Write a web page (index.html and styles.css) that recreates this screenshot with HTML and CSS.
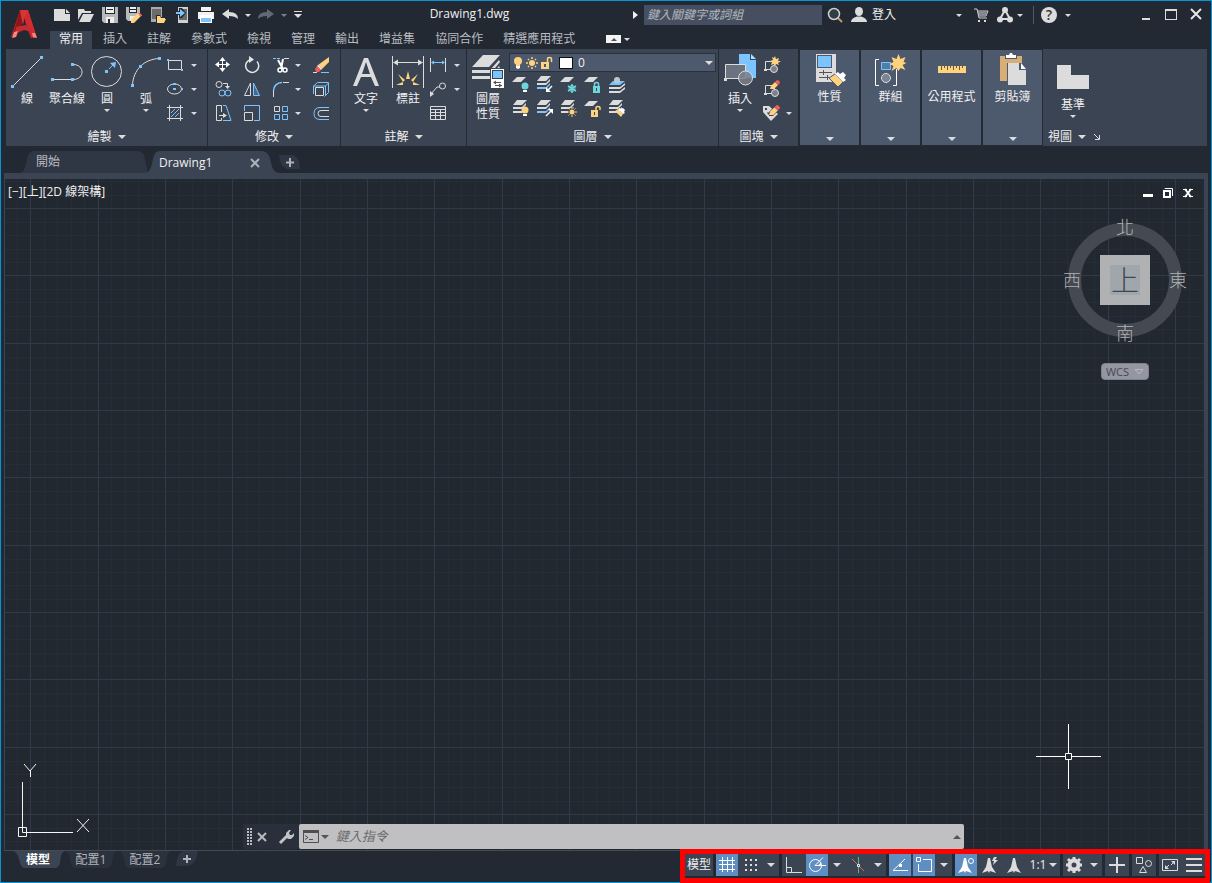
FILE: index.html
```html
<!DOCTYPE html>
<html lang="zh-Hant">
<head>
<meta charset="utf-8">
<meta name="viewport" content="width=device-width, initial-scale=1">
<title>Drawing1.dwg</title>
<link rel="stylesheet" href="styles.css">
</head>
<body>
<svg class="defs" aria-hidden="true">
  <defs>
    <symbol id="sheet1" viewBox="0 0 18 18"><path class="f" d="M5 1h9l-5 5H0z"/></symbol>
    <symbol id="sheet3" viewBox="0 0 18 18"><path class="f" d="M5 0h10l-5 5H1z"/><path class="f" d="M1 7h9l4-4v2l-4 4H1z"/><path class="f" d="M1 11h9l4-4v2l-4 4H1z"/></symbol>
    <symbol id="sheet3b" viewBox="0 0 18 18"><path class="f" d="M5 0h10l-5 5H1z"/><path class="f" d="M1 7h9l4-4v2l-4 4H1z"/><path class="fb" d="M1 11h9l4-4v2l-4 4H1z"/></symbol>
    <symbol id="pencil" viewBox="0 0 10 10"><path class="fy" d="M1 6l4-4 3 3-4 4H0z"/><path class="fr" d="M5 2l1.500-1.500Q7 0 8 0l2 2q0 1-.5 1.500L8 5z"/></symbol>
  </defs>
</svg>
<div class="window">
  <header class="header">
    <button class="logo" aria-label="應用程式功能表">
      <svg width="26" height="30" viewBox="0 0 26 30"><path d="M9 1h8l9 28h-6l-2-5-3-8-2-8-3 8-5 11-5 1z" fill="#c8262c"/><path d="M9 1h4l-1 8L6 28l-5 1z" fill="#8e1518"/><path d="M17 1l9 28-5-2-8-20 1-6z" fill="#d22c32"/><path d="M9 1h8l-3 6-2 9-2-9z" fill="#d6353a"/><path d="M5 18l9-2 5 2 2 5-8-2-9 4z" fill="#c42a2e"/><path d="M1 29l2-6 4-1-2 6zM21 24l3 0 2 5-4-1z" fill="#ee8d84"/></svg>
    </button>
    <div class="titlebar">
      <div class="quick">
        <button class="qb" aria-label="新建"><svg width="18" height="18"><path class="f" d="M1 3h11v5h5v7H1z"/><path class="f" d="M13 3l4 4h-4z"/></svg></button>
        <button class="qb" aria-label="開啟"><svg width="18" height="18"><path class="f" d="M1 3h6l1 2h6v2H5L1 14z"/><path class="f" d="M6 8h11l-4 8H2z"/></svg></button>
        <button class="qb" aria-label="儲存"><svg width="18" height="18"><path fill="#b9b9b9" d="M1 1h16v16H3l-2-2z"/><path fill="#222933" d="M4 1h10v7H4z"/><path fill="#eee" d="M5 1h8v6H5zM5 11h8v6H5z"/><path fill="#222933" d="M6 3h6v1H6zM7 13h2v4H7z"/></svg></button>
        <button class="qb" aria-label="另存"><svg width="18" height="18"><path fill="#b9b9b9" d="M1 1h14v7L7 15H3l-2-2z"/><path fill="#222933" d="M4 1h8v6H4z"/><path fill="#eee" d="M5 1h6v5H5zM5 10h6l-4 5H5z"/><path fill="#222933" d="M5 3h6v1H5z"/><path class="fy" d="M6 14l7-7 3 3-7 7H6z"/><path class="fr" d="M13 7h2l2 2v1h-2z"/></svg></button>
        <button class="qb" aria-label="從行動裝置開啟"><svg width="18" height="18"><path fill="#a9a9a9" d="M2 1h11v15H2z"/><path fill="#6b6b6b" d="M3 3h9v10H3z"/><path fill="#222933" d="M7 9h4l1 2h5l-2 7H7z"/><path class="fy" d="M8 10h3l1 2h4v1h-5l-3 4zM11 13h6l-2 4H8z"/></svg></button>
        <button class="qb" aria-label="儲存至行動裝置"><svg width="18" height="18"><path fill="#d0d0d0" d="M5 1h10v16H5z"/><path fill="#6b6b6b" d="M6 3h8v11H6z"/><path fill="#222933" d="M6 2h3l4 5-4 5H6V9H2V5h4z"/><path class="fb" d="M3 6h4V3l5 4-5 4V8H3z"/></svg></button>
        <button class="qb" aria-label="出圖"><svg width="18" height="18"><path fill="#f1f1f1" d="M4 1h10v4H4zM1 6h16v7h-2v-2H3v2H1z"/><path fill="#fff" d="M3 9h12v8H3z"/><path class="fb" d="M4 12h10v4H4z"/></svg></button>
        <button class="qb" aria-label="退回"><svg width="18" height="18"><path class="f" d="M1 8l7-5v3q9 0 9 7-3-3-9-3v3z"/></svg></button>
        <button class="drop" aria-label="退回清單"><i class="caret"></i></button>
        <button class="qb dim" aria-label="重做"><svg width="18" height="18"><path d="M17 8l-7-5v3q-9 0-9 7 3-3 9-3v3z" fill="#636973"/></svg></button>
        <button class="drop dim" aria-label="重做清單"><i class="caret"></i></button>
        <button class="drop wide" aria-label="自訂"><svg width="10" height="10"><path class="f" d="M1 1h8v1H1zM1 4h8L5 8z"/></svg></button>
      </div>
      <div class="doc-title">Drawing1.dwg</div>
      <div class="search">
        <i class="play"></i>
        <input type="search" aria-label="搜尋" placeholder="鍵入關鍵字或詞組">
        <button aria-label="執行搜尋"><svg width="18" height="18"><path d="M12 12l4 4" stroke="#c39a66" stroke-width="2"/><circle cx="8" cy="8" r="5.500" fill="#2d3e47" stroke="#d0d0d0" stroke-width="1.500"/></svg></button>
        <button class="login"><svg width="18" height="18"><ellipse class="f" cx="9" cy="5.500" rx="4" ry="4.500"/><path class="f" d="M1 16q0-4 6-5.500h4Q17 12 17 16z"/></svg><span>登入</span></button>
      </div>
      <div class="services">
        <button class="drop" aria-label="登入選項"><i class="caret"></i></button>
        <button class="cart" aria-label="App Store"><svg width="16" height="16"><path d="M1 2h3l2 9h8M5 4h10l-2 5H6z" fill="none" stroke="#d0d0d0"/><path d="M5 4h9l-1 5H6z" fill="#868a90"/><path class="f" d="M5 13h2v2H5zM11 13h2v2h-2z"/></svg></button>
        <button aria-label="連線"><svg width="18" height="18"><path d="M9 4L4 13h10z" fill="none" stroke="#dcdcdc" stroke-width="2"/><circle class="f" cx="9" cy="4" r="3"/><circle class="f" cx="4" cy="13.500" r="3"/><circle class="f" cx="14" cy="13.500" r="3"/></svg></button>
        <button class="drop" aria-label="連線選項"><i class="caret"></i></button>
        <span class="rule"></span>
        <button class="help" aria-label="說明"><span>?</span></button>
        <button class="drop" aria-label="說明選項"><i class="caret"></i></button>
      </div>
      <div class="winctl">
        <button aria-label="最小化"><svg width="14" height="14"><path class="f" d="M3 10h8v2H3z"/></svg></button>
        <button aria-label="最大化"><svg width="14" height="14"><path class="f" d="M1 1h12v11H1zM2 3v8h10V3z" fill-rule="evenodd"/></svg></button>
        <button aria-label="關閉"><svg width="14" height="14"><path d="M2 1l10 10M12 1L2 11" stroke="#e6e6e6" stroke-width="2"/></svg></button>
      </div>
    </div>
    <nav class="tabs">
      <button class="on">常用</button><button>插入</button><button>註解</button><button>參數式</button><button>檢視</button><button>管理</button><button>輸出</button><button>增益集</button><button>協同合作</button><button>精選應用程式</button>
      <div class="ribbon-toggle"><button class="min" aria-label="最小化功能區"><i class="caret up"></i></button><button class="drop" aria-label="功能區選項"><i class="caret"></i></button></div>
    </nav>
  </header>

  <main class="ribbon">
    <section class="panel">
      <div class="tools pad">
        <button class="big"><svg width="32" height="32"><path class="l" d="M1.500 30.500l29-29"/><path class="fb" d="M0 29h3v3H0zM29 0h3v3h-3z"/></svg><span>線</span></button>
        <button class="big"><svg width="32" height="32"><path class="l" d="M2 23.500h20M22 8.500c12 0 12 15 0 15"/><path class="fb" d="M0 22h3v3H0zM20 22h3v3h-3zM20 7h3v3h-3z"/></svg><span>聚合線</span></button>
        <button class="big"><svg width="32" height="32"><circle class="l" cx="15.500" cy="15.500" r="15"/><path class="lb" d="M18 13l5-5"/><path class="fb" d="M14 14h3v3h-3zM19 7l6-1-1 6z"/></svg><span>圓</span><i class="caret"></i></button>
        <button class="big narrow"><svg width="32" height="32"><path class="l" d="M2.500 29.500C3 14 14 3 29.500 2.500"/><path class="fb" d="M1 28h3v3H1zM9 9h3v3H9zM28 1h3v3h-3z"/></svg><span>弧</span><i class="caret"></i></button>
        <div class="grid-draw">
          <button aria-label="矩形"><svg width="18" height="18"><path class="l" d="M2.500 4.500h13v9h-13z"/><path class="fb" d="M1 3h2v2H1zM15 13h2v2h-2z"/></svg></button><button class="drop" aria-label="矩形選項"><i class="caret"></i></button>
          <button aria-label="橢圓"><svg width="18" height="18"><ellipse class="l" cx="8.500" cy="9" rx="7" ry="5"/><path class="fb" d="M7 3h3v2H7zM7 8h3v2H7zM15 8h2v2h-2z"/></svg></button><button class="drop" aria-label="橢圓選項"><i class="caret"></i></button>
          <button aria-label="填充線"><svg width="18" height="18"><path class="l" d="M3.500 1v16M14.500 1v16M1 3.500h16M1 14.500h16"/><path class="lb" d="M5 9l4-4M5 13l8-8M9 13l4-4"/></svg></button><button class="drop" aria-label="填充線選項"><i class="caret"></i></button>
        </div>
      </div>
      <button class="foot">繪製<i class="caret lg"></i></button>
    </section>

    <section class="panel">
      <div class="tools">
        <div class="grid-modify">
          <button aria-label="移動"><svg width="18" height="18"><path d="M8.500 3v12M3 8.500h12" stroke="#fff"/><path d="M8.500 1l3 4h-6zM8.500 16l3-4h-6zM1 8.500l4-3v6zM16 8.500l-4-3v6z" fill="#fff"/></svg></button>
          <button aria-label="旋轉"><svg width="18" height="18"><path d="M8 3.500a6.500 6.500 0 1 0 6 2" fill="none" stroke="#e6e6e6" stroke-width="1.500"/><path d="M6 0l5 3.500L6 7z" fill="#e6e6e6"/></svg></button>
          <button aria-label="修剪"><svg width="18" height="18"><path class="lb" d="M1 2.500h8" stroke-dasharray="3 1"/><path class="l" d="M12 2.500h5"/><path d="M6 4l5 9M11 3l-2 10" stroke="#fff" stroke-width="2"/><circle cx="8" cy="14" r="2" fill="none" stroke="#fff" stroke-width="1.500"/><circle cx="13" cy="14" r="2" fill="none" stroke="#fff" stroke-width="1.500"/></svg></button>
          <button class="drop" aria-label="修剪選項"><i class="caret"></i></button>
          <button aria-label="刪除"><svg width="18" height="18"><path class="fy" d="M17 1v5l-7 7-4-4z"/><path fill="#fff" d="M6 9l4 4-1 1-4-4z"/><path class="fr" d="M5 10l4 4-2 2H4l-1-3z"/><path class="l" d="M1 16.500h4"/><path class="lb" d="M9 16.500h8"/></svg></button>

          <button aria-label="複製"><svg width="18" height="18"><circle class="l" cx="5" cy="4.500" r="3"/><path class="l" d="M9 3.500h4.500V7"/><path class="f" d="M11 6h5l-2.500 3z"/><circle class="lb" cx="8" cy="13" r="3"/><circle class="lb" cx="14" cy="13" r="3"/></svg></button>
          <button aria-label="鏡射"><svg width="18" height="18"><path class="l" d="M7.500 3v12.500h-6z"/><path d="M10.500 3v12.500h6z" fill="#46688a" stroke="#7cc4ff"/></svg></button>
          <button aria-label="圓角"><svg width="18" height="18"><path class="lb" d="M1.500 11C1.500 6 5 2.500 10 2.500" stroke-width="1.500"/><path class="l" d="M11 2.500h6M1.500 11v6"/></svg></button>
          <button class="drop" aria-label="圓角選項"><i class="caret"></i></button>
          <button aria-label="分解"><svg width="18" height="18"><path class="l" d="M3.500 7.500h8v8h-8z"/><path class="lb" d="M1.500 14V6l4-3.500h11v10l-4 4M1.500 6h12v10M13.500 6l3-3"/></svg></button>

          <button aria-label="拉伸"><svg width="18" height="18"><path class="l" d="M7.500 8V1.500h-5v15h5V14M5 11.500h6"/><path class="f" d="M9 9l4 2.500L9 14z"/><path class="lb" d="M9 1.500h3l5 15H9"/></svg></button>
          <button aria-label="比例"><svg width="18" height="18"><path class="lb" d="M1.500 7V1.500h15v15H11"/><path class="l" d="M1.500 8.500h8v8h-8z"/></svg></button>
          <button aria-label="陣列"><svg width="18" height="18"><path class="l" d="M2.500 2.500h5v5h-5z"/><path class="lb" d="M10.500 2.500h5v5h-5zM2.500 10.500h5v5h-5zM10.500 10.500h5v5h-5z"/></svg></button>
          <button class="drop" aria-label="陣列選項"><i class="caret"></i></button>
          <button aria-label="偏移"><svg width="18" height="18"><path class="lb" d="M17 3.500H8q-6 0-6 6t6 6h9"/><path class="l" d="M17 6.500H9q-3 0-3 3t3 3h8"/></svg></button>
        </div>
      </div>
      <button class="foot">修改<i class="caret lg"></i></button>
    </section>

    <section class="panel">
      <div class="tools">
        <button class="big text-tool"><svg width="32" height="32"><path class="f" d="M14 2h4l11 28h-4l-4-9H11l-4 9H3zM16 6l-4 12h8z" fill-rule="evenodd"/></svg><span>文字</span><i class="caret"></i></button>
        <button class="big dim-tool"><svg width="32" height="32"><path class="l" d="M.5 0v32M31.500 0v32M2 6.500h28"/><path class="f" d="M1 6.500l5-3v6zM31 6.500l-5-3v6z"/><path class="fy" d="M16 15l2 8h-4zM6 18l7 6-2 2zM26 18l-7 6 2 2zM4 29l7-3v3zM28 29l-7-3v3z"/></svg><span>標註</span></button>
        <div class="grid-draw annot">
          <button aria-label="線性"><svg width="18" height="18"><path class="l" d="M1.500 2v14M16.500 2v14"/><path class="lb" d="M3 6.500h12"/><path class="fb" d="M2 6.500l3-2v4zM16 6.500l-3-2v4z"/></svg></button><button class="drop" aria-label="線性選項"><i class="caret"></i></button>
          <button aria-label="引線"><svg width="18" height="18"><circle class="l" cx="13.500" cy="6" r="3"/><path class="l" d="M2 14l6-7h3"/><path class="f" d="M1 11l4 3-4 3z"/></svg></button><button class="drop" aria-label="引線選項"><i class="caret"></i></button>
          <button aria-label="表格"><svg width="18" height="18"><path class="l" d="M1.500 2.500h15v13h-15zM1 5.500h16M1 8.500h16M1 11.500h16M6.500 5v10M11.500 5v10"/></svg></button>
        </div>
      </div>
      <button class="foot">註解<i class="caret lg"></i></button>
    </section>

    <section class="panel">
      <div class="tools">
        <button class="big layer-tool"><svg width="32" height="33"><path class="f" d="M11 0h17L17 12H0z"/><path class="f" d="M0 15h18l9-10 1 2-9 11H0z" /><path class="f" d="M0 21h18l9-10 1 2-9 11H0z"/><path fill="#3b4453" d="M18 13h15v20H18z"/><path fill="#fff" d="M19 14h13v19H19z"/><path fill="#3b4453" d="M20 15h11v9H20z"/><path class="fb" d="M21 16h9v7h-9z"/><path d="M22 27.500h7M23 30.500h7" stroke="#555"/><path fill="#555" d="M21 27.500l3-2v4zM30 30.500l-3-2v4z"/></svg><span>圖層<br>性質</span></button>
        <div class="layers">
          <div class="layer-combo">
            <svg width="14" height="14"><circle class="fy" cx="7" cy="5" r="4"/><path class="fy" d="M5 8h4v2H5z"/><path fill="#fff" d="M5 10h4v2l-2 1-2-1z"/></svg>
            <svg width="14" height="14"><circle class="fy" cx="7" cy="7" r="3"/><path d="M7 1v2M7 11v2M1 7h2M11 7h2M3 3l1 1M10 10l1 1M11 3l-1 1M4 10l-1 1" stroke="#ffd27f" stroke-width="1.500"/></svg>
            <svg width="14" height="14"><path class="fy" d="M2 6h8v7H2z"/><path d="M8.500 6V3q0-1.500 2-1.500t2 1.500v3" fill="none" stroke="#ffd27f" stroke-width="1.500"/><path fill="#4d596d" d="M5 8h2v3H5z"/></svg>
            <span class="swatch"></span>
            <select aria-label="圖層"><option>0</option></select>
            <i class="caret lg"></i>
          </div>
          <div class="layer-grid">
            <button aria-label="關閉圖層"><svg width="18" height="18"><use href="#sheet1"/><circle class="ft" cx="13" cy="10" r="3.500"/><path fill="#fff" d="M11 14h4v2h-4z"/></svg></button>
            <button aria-label="設為目前"><svg width="18" height="18"><use href="#sheet3b"/><path d="M16 10l-4 4" stroke="#fff" stroke-width="1.500"/><path fill="#fff" d="M10 16v-5l5 5z"/></svg></button>
            <button aria-label="凍結"><svg width="18" height="18"><use href="#sheet1"/><path d="M12 8v9M8 10l8 5M16 10l-8 5" stroke="#6fd6dd" stroke-width="1.500"/><circle cx="12" cy="12.500" r="3" fill="none" stroke="#6fd6dd"/></svg></button>
            <button aria-label="鎖護"><svg width="18" height="18"><use href="#sheet1"/><path class="ft" d="M9 10h7v7H9z"/><path d="M10.500 10V8q0-1.500 2-1.500t2 1.500v2" fill="none" stroke="#6fd6dd" stroke-width="1.500"/><path fill="#3b4453" d="M12 12h1v3h-1z"/></svg></button>
            <button aria-label="相符"><svg width="18" height="18"><path class="fb" d="M5 5h12l-5 4H1z"/><path class="f" d="M1 11h11l5-4v2l-5 4H1zM1 15h11l5-4v2l-5 4H1z"/><circle cx="9" cy="4" r="3" fill="#c4c6c8"/></svg></button>
            <button aria-label="開啟全部"><svg width="18" height="18"><use href="#sheet3"/><circle class="fy" cx="13" cy="10" r="3.500"/><path fill="#fff" d="M11 14h4v2h-4z"/></svg></button>
            <button aria-label="前次圖層"><svg width="18" height="18"><use href="#sheet3b"/><path d="M10 16l5-5" stroke="#fff" stroke-width="1.500"/><path fill="#fff" d="M17 9v5l-5-5z"/></svg></button>
            <button aria-label="全部解凍"><svg width="18" height="18"><use href="#sheet3"/><circle cx="12" cy="12" r="4" fill="#3b4453"/><circle class="fy" cx="12" cy="12" r="2.500"/><path d="M12 7v2M12 15v2M7 12h2M15 12h2M8.500 8.500l1 1M14.500 14.500l1 1M15.500 8.500l-1 1M8.500 15.500l1-1" stroke="#ffd27f"/></svg></button>
            <button aria-label="解鎖"><svg width="18" height="18"><use href="#sheet1"/><path class="fy" d="M7 10h7v7H7z"/><path d="M12 10V8q0-1.500 2-1.500T16 8v2" fill="none" stroke="#ffd27f" stroke-width="1.500"/><path fill="#3b4453" d="M10 12h1v3h-1z"/></svg></button>
            <button aria-label="變更圖層"><svg width="18" height="18"><use href="#sheet3"/><path class="fy" d="M7 11l3-2 5 5-2 3z"/><path fill="#fff" d="M10 9l2-1 1 1 2-1 2 2-1 2 1 1-2 1z"/></svg></button>
          </div>
        </div>
      </div>
      <button class="foot">圖層<i class="caret lg"></i></button>
    </section>

    <section class="panel">
      <div class="tools">
        <button class="big insert-tool"><svg width="32" height="34"><path class="fb" d="M15 0h11v6h6v18H15z"/><path fill="#b5dfff" d="M27 0l5 5h-5z"/><path fill="#6b7280" stroke="#dcdcdc" d="M1.500 10.500h20v14h-20z"/><path class="f" d="M0 24h3v3H0z"/><circle cx="21.500" cy="24" r="7" fill="#7a808c" fill-opacity=".85" stroke="#dcdcdc"/></svg><span>插入</span><i class="caret"></i></button>
        <div class="grid-draw block">
          <button aria-label="建立"><svg width="18" height="18"><path class="l" d="M2.500 5.500h9v8h-9z"/><path class="f" d="M1 13h3v2H1z"/><circle cx="11" cy="13" r="3.500" fill="#7a808c" stroke="#dcdcdc"/><path class="fy" d="M12 0l1 3 3-1-1 3 3 0-3 2 1 2-3-1-1 2-1-2-3 1 1-3-2-1 3-1-1-3 2 1z"/></svg></button><span></span>
          <button aria-label="編輯"><svg width="18" height="18"><path class="l" d="M2.500 5.500h9v8h-9z"/><path class="f" d="M1 13h3v2H1z"/><circle cx="12" cy="13" r="3.500" fill="#7a808c" stroke="#dcdcdc"/><use href="#pencil" x="7" y="0" width="10" height="10"/></svg></button><span></span>
          <button aria-label="編輯屬性"><svg width="18" height="18"><path class="f" d="M0 2h6l9 8-7 7-8-9z"/><path fill="#3b4453" d="M2 4h2v2H2zM5 8l3 3-1 1-3-3z"/><path fill="#3b4453" d="M6 8l7-7 4 4-7 7H6z"/><use href="#pencil" x="6" y="1" width="11" height="11"/></svg></button><button class="drop" aria-label="屬性選項"><i class="caret"></i></button>
        </div>
      </div>
      <button class="foot">圖塊<i class="caret lg"></i></button>
    </section>

    <button class="folded"><svg width="32" height="32"><path class="f" d="M2 0h20v28H2z"/><path fill="#4d596d" d="M3 1h15v13H3z"/><path class="fb" d="M4 2h13v11H4z"/><path d="M5 18.500h13M5 23.500h10M9.500 16v5M13.500 21v5" stroke="#555"/><path class="fy" stroke="#4d596d" d="M15 24l6-4 8 8-5 5z"/><path fill="#fff" d="M21 20l3-2 2 2 3-2 3 3-2 3 2 2-3 2z"/></svg><span>性質</span><i class="caret lg"></i></button>
    <button class="folded"><svg width="32" height="32"><path d="M4 5.500H.5v26H4M18 31.500h3.500V15" fill="none" stroke="#fff"/><path d="M6.500 8.500h9v7h-9z" fill="#4f7fa8" stroke="#7cc4ff"/><circle cx="11" cy="24" r="4.500" fill="#7a8492" stroke="#dcdcdc"/><path class="fy" d="M23.500 0l2 5 5-2-2 5 3 1-4 2 3 5-5-2-2 3-2-3-5 3 2-5-4-2 4-2-2-5 5 2z"/></svg><span>群組</span><i class="caret lg"></i></button>
    <button class="folded"><svg width="32" height="32"><path class="fy" d="M2 12h28v7H2z"/><path d="M5.500 12v4M8.500 12v2M11.500 12v4M14.500 12v2M17.500 12v4M20.500 12v2M23.500 12v4M26.500 12v2" stroke="#6b5a34"/></svg><span>公用程式</span><i class="caret lg"></i></button>
    <button class="folded"><svg width="32" height="32"><path fill="#d9ad76" d="M3 2h22v7H10v18H3z"/><path fill="#4d596d" d="M8 2h12v3H8z"/><path fill="#fff" d="M9 1h3l1-2h2l1 2h3v3H9z"/><path class="f" d="M11 9h11v7h7v15H11z"/><path fill="#fff" d="M24 9l5 6h-5z"/></svg><span>剪貼簿</span><i class="caret lg"></i></button>

    <section class="panel last">
      <div class="tools">
        <button class="big base-tool"><svg width="32" height="24"><path class="f" d="M0 0h14v10h18v14H0z"/></svg><span>基準</span><i class="caret"></i></button>
      </div>
      <div class="foot"><button>視圖<i class="caret lg"></i></button><button aria-label="視圖設定"><svg width="6" height="6"><path d="M0 0l5 5M5.500 1v4.500H1" fill="none" stroke="#dcdcdc"/></svg></button></div>
    </section>
  </main>

  <nav class="files">
    <button class="file first"><svg width="130" height="22"><path d="M0 22C12 22 5 0 16 0H118Q124 0 126 4L130 22z" fill="#303744"/></svg><span>開始</span></button>
    <div class="file current"><svg width="136" height="22"><path d="M0 22C12 22 5 0 16 0H117C131 0 123 22 136 22z" fill="#3b4453"/></svg><button>Drawing1</button><button class="x" aria-label="關閉頁籤"><svg width="10" height="10"><path d="M1 1l8 8M9 1L1 9" stroke="#aeb2b8" stroke-width="2"/></svg></button></div>
    <button class="file add" aria-label="新頁籤"><svg width="22" height="14"><path d="M0 0H14Q21 2 21 14H8Q1 12 0 0z" fill="#303744"/><path d="M11 3v9M7 7.500h8" stroke="#aeb2b8" stroke-width="2"/></svg></button>
  </nav>

  <div class="viewport">
    <svg class="gridlines" aria-hidden="true">
      <defs><pattern id="g" x="25" y="29" width="202" height="202" patternUnits="userSpaceOnUse">
        <path class="minor" d="M14 0V202M27 0V202M41 0V202M54 0V202M81 0V202M95 0V202M108 0V202M122 0V202M149 0V202M162 0V202M175 0V202M189 0V202" transform="translate(.5 0)"/>
        <path class="minor" d="M0 14H202M0 27H202M0 41H202M0 54H202M0 81H202M0 94H202M0 108H202M0 121H202M0 149H202M0 162H202M0 175H202M0 189H202" transform="translate(0 .5)"/>
        <path class="major" d="M.5 0V202M68.500 0V202M135.500 0V202M0 .5H202M0 67.500H202M0 135.500H202"/>
      </pattern></defs>
      <rect width="100%" height="100%" fill="url(#g)"/>
    </svg>
    <div class="vp-top">
      <div class="vp-label">[−][上][2D 線架構]</div>
      <div class="vp-ctl">
        <button aria-label="最小化視埠"><svg width="12" height="12"><path fill="#fff" d="M1 7h10v3H1z"/></svg></button>
        <button aria-label="還原視埠"><svg width="12" height="12"><path d="M3 2V1.500h7.500V9" fill="none" stroke="#fff"/><path d="M2 4h6v6H2z" fill="none" stroke="#fff" stroke-width="2"/></svg></button>
        <button aria-label="關閉視埠"><svg width="12" height="12"><path d="M3 2l6 8M9 2l-6 8" stroke="#fff" stroke-width="2"/><path d="M1 2.500h4M7 2.500h4M1 9.500h4M7 9.500h4" stroke="#fff"/></svg></button>
      </div>
    </div>
    <div class="cube">
      <span class="n">北</span><span>西</span><button class="face">上</button><span>東</span><span class="s">南</span>
    </div>
    <button class="wcs">WCS<svg width="10" height="6"><path d="M1 .5h8L5 5z" fill="none" stroke="#b5b7c2"/></svg></button>
    <svg class="ucs" width="76" height="76" aria-hidden="true"><path d="M6.500 18v50.500H57M2.500 63.500h8v9h-8zM8 0l6 7 6-7M14.500 6v7M61 55l12 13M73 55L61 68" fill="none" stroke="#f4f4f4"/></svg>
    <svg class="cross" width="65" height="65" aria-hidden="true"><path d="M32.500 0v29M32.500 36v29M0 32.500h29M36 32.500h29M29.500 29.500h6v6h-6z" fill="none" stroke="#fff"/></svg>
    <div class="command">
      <svg width="5" height="17" aria-hidden="true"><path d="M1 0v17M4 0v17" stroke="#b9bbbf" stroke-width="2" stroke-dasharray="2 1"/></svg>
      <button aria-label="關閉指令行"><svg width="12" height="12"><path d="M2 2l8 8M10 2l-8 8" stroke="#b9bbbf" stroke-width="2"/></svg></button>
      <button aria-label="自訂指令行"><svg width="16" height="16"><path d="M2 14l8-8" stroke="#c0c2c5" stroke-width="3"/><path fill="#c0c2c5" d="M8 4l3-3h2l-2 3 1 2h2l2-2v3l-3 3h-3L8 8z"/></svg></button>
      <div class="cmdbox">
        <button aria-label="最近使用的指令"><svg width="16" height="13"><path d="M.5.500h15v12H.5z" fill="none" stroke="#4f4f4f"/><path fill="#4f4f4f" d="M0 0h16v3H0z"/><path d="M2 5.500l3 2-3 2M6 9.500h4" fill="none" stroke="#4f4f4f"/></svg><i class="caret lg"></i></button>
        <input type="text" aria-label="指令" placeholder="鍵入指令">
        <button aria-label="展開記錄"><i class="caret lg up"></i></button>
      </div>
    </div>
  </div>

  <footer class="bottom">
    <nav class="layouts">
      <button class="lt on"><svg width="52" height="17"><path d="M0 0H52C45 2 50 17 42 17H12C5 17 8 2 0 0z" fill="#3b4453"/></svg><span>模型</span></button>
      <button class="lt"><svg width="52" height="17"><path d="M0 0H52C45 2 50 17 42 17H10C3 17 8 2 0 0z" fill="#2b323e"/></svg><span>配置1</span></button>
      <button class="lt"><svg width="52" height="17"><path d="M0 0H52C45 2 50 17 42 17H10C3 17 8 2 0 0z" fill="#2b323e"/></svg><span>配置2</span></button>
      <button class="lt add" aria-label="新配置"><svg width="22" height="15"><path d="M6 0h16Q20 15 10 15H0Q1 3 6 0z" fill="#303744"/><path d="M11 4v8M7 8h8" stroke="#b0b4ba" stroke-width="2"/></svg></button>
    </nav>
    <div class="status">
      <button class="model">模型</button>
      <div class="grp">
        <button class="on" aria-label="格線"><svg width="18" height="18"><path class="lw" d="M4.500 1v15M9.500 1v15M14.500 1v15M1 4.500h16M1 8.500h16M1 13.500h16"/></svg></button>
        <div class="pair"><button aria-label="鎖點"><svg width="18" height="18"><path class="f" d="M3 3h2v2H3zM8 3h2v2H8zM13 3h2v2h-2zM3 8h2v2H3zM8 8h2v2H8zM13 8h2v2h-2zM3 13h2v2H3zM8 13h2v2H8zM13 13h2v2h-2z"/></svg></button><button class="dd" aria-label="鎖點選項"><i class="caret lg"></i></button></div>
      </div>
      <div class="grp">
        <button aria-label="正交"><svg width="18" height="18"><path class="l" d="M2.500 1v15.500H18M2.500 11.500h5v5"/></svg></button>
        <div class="pair"><button class="on" aria-label="極座標追蹤"><svg width="18" height="18"><circle class="lw" cx="7.500" cy="9.500" r="6"/><path class="lw" d="M7 9.500h11M7 9.500l8-8"/><path d="M10 9.500l3-3v3z" fill="#fff"/></svg></button><button class="dd" aria-label="極座標選項"><i class="caret lg"></i></button></div>
        <div class="pair"><button aria-label="等角製圖"><svg width="18" height="18"><path d="M3 3l12 12" stroke="#d66a6a"/><path d="M9.500 1v16" stroke="#57b878"/><path d="M8.500 8.500h2v2h-2z" fill="#3b4453" stroke="#eee"/></svg></button><button class="dd" aria-label="等角選項"><i class="caret lg"></i></button></div>
      </div>
      <div class="grp">
        <button class="on" aria-label="物件鎖點追蹤"><svg width="18" height="18"><path class="lw" d="M14 3L2 14.500h15"/><path fill="#fff" d="M8 8h3v3H8z"/></svg></button>
        <div class="pair"><button class="on" aria-label="物件鎖點"><svg width="18" height="18"><path class="lw" d="M8 3.500h8.500v12h-13V8M1.500 1.500h4v4h-4z"/></svg></button><button class="dd" aria-label="物件鎖點選項"><i class="caret lg"></i></button></div>
      </div>
      <div class="grp">
        <button class="on" aria-label="註解可見性"><svg width="18" height="18"><path fill="#fff" d="M7 2h2l2 9 4 6-6-2-1 2-1-2-6 2 4-6z"/><circle cx="14" cy="5" r="2.500" fill="#5e8ec2" stroke="#fff"/></svg></button>
        <button aria-label="自動比例"><svg width="18" height="18"><path class="f" d="M7 2h2l2 9 4 6-6-2-1 2-1-2-6 2 4-6zM13 1h3l-2 3h3l-5 5 1-4h-2z"/></svg></button>
        <button aria-label="註解比例圖示"><svg width="18" height="18"><path class="f" d="M8 2h2l2 9 4 6-6-2-1 2-1-2-6 2 4-6z"/></svg></button>
        <button class="scale">1:1<i class="caret lg"></i></button>
      </div>
      <div class="grp">
        <div class="pair"><button aria-label="工作區"><svg width="18" height="18"><circle cx="9" cy="9" r="4.500" fill="none" stroke="#dcdcdc" stroke-width="4"/><path d="M9 1v2M9 15v2M1 9h2M15 9h2M3 3l2 2M13 13l2 2M15 3l-2 2M3 15l2-2" stroke="#dcdcdc" stroke-width="3"/></svg></button><button class="dd" aria-label="工作區選項"><i class="caret lg"></i></button></div>
      </div>
      <div class="grp"><button class="w" aria-label="註解監視器"><svg width="18" height="18"><path d="M9 1v16M1 9h16" stroke="#dcdcdc" stroke-width="2"/></svg></button></div>
      <div class="grp"><button class="w" aria-label="隔離物件"><svg width="18" height="18"><path class="l" d="M1.500 1.500h6v6h-6zM8 10.500l3.500 6h-7z"/><circle class="l" cx="13.500" cy="7.500" r="3"/></svg></button></div>
      <div class="grp">
        <button aria-label="全螢幕"><svg width="18" height="18"><path class="l" d="M1.500 3.500h15v11h-15zM5 12l3-3M10 9l3-3"/><path class="f" d="M4 9v4h4zM14 9V5h-4z"/></svg></button>
        <button aria-label="自訂"><svg width="18" height="18"><path d="M1 3h16M1 9h16M1 15h16" stroke="#dcdcdc" stroke-width="2"/></svg></button>
      </div>
    </div>
  </footer>
</div>
</body>
</html>
```

FILE: styles.css
```css
:root {
  --dark: #222933;
  --canvas: #212830;
  --panel: #3b4453;
  --raised: #4d596d;
  --ink: #f0f0f0;
  --light: #dcdcdc;
  --active: #5e8ec2;
}
*, *::before { box-sizing: border-box; }
body, button, input, select {
  font: 12px/16px "Open Sans", "Noto Sans CJK TC", sans-serif;
  color: var(--ink);
}
body { margin: 0; background: var(--dark); }
button {
  margin: 0; padding: 0; border: 0; background: none; cursor: pointer;
  display: flex; align-items: center; justify-content: center; white-space: nowrap;
}
svg { display: block; flex: none; overflow: visible; }
.defs { position: absolute; width: 0; height: 0; }

.f { fill: #dcdcdc; }
.fb { fill: #7cc4ff; }
.fy { fill: #ffd27f; }
.fr { fill: #f25c5c; }
.ft { fill: #6fd6dd; }
.l { fill: none; stroke: #dcdcdc; }
.lb { fill: none; stroke: #7cc4ff; }
.lw { fill: none; stroke: #fff; }

.caret { flex: none; border: 3px solid transparent; border-top-color: var(--light); border-bottom: 0; }
.caret.lg { border-width: 4px 4px 0; }
.caret.up { border: 3px solid transparent; border-top: 0; border-bottom-color: #555; }
.caret.lg.up { border-width: 0 4px 4px; }
.drop { width: 12px; }
.dim .caret { border-top-color: #7b8088; }

.window {
  min-height: 100vh; display: flex; flex-direction: column;
  border: 1px solid #0696d7; background: var(--dark);
}

/* title bar and ribbon tabs */
.header { display: grid; grid-template-columns: 49px 1fr; grid-template-rows: 28px 20px; }
.logo { grid-row: 1 / 3; padding: 0 3px 3px 0; }
.titlebar { display: flex; align-items: center; }
.quick { display: flex; align-items: center; }
.qb { width: 24px; height: 24px; }
.drop.wide { width: 16px; }
.doc-title { flex: 1; text-align: center; padding-bottom: 2px; }
.search { display: flex; align-items: center; }
.play { border: 4px solid transparent; border-left: 5px solid var(--ink); border-right: 0; margin-right: 6px; }
.search input {
  width: 178px; height: 20px; border: 0; padding: 0 3px 2px; margin-right: 4px;
  background: #464f61; font-style: italic; appearance: none;
}
.search input::placeholder { color: #b4b8bf; opacity: 1; }
.search > button { min-width: 18px; }
.search .login { gap: 4px; margin-left: 6px; }
.services { display: flex; align-items: center; justify-content: flex-end; width: 178px; }
.cart { margin: 0 7px 0 8px; }
.rule { width: 1px; height: 18px; background: #4d596d; margin: 0 7px; }
.help { margin-right: 5px; }
.help span {
  width: 16px; height: 16px; border-radius: 50%; background: var(--light); color: #333;
  font-size: 14px; font-weight: 600; text-align: center;
}
.winctl { display: flex; align-items: center; gap: 11px; margin: 0 8px 0 65px; }

.tabs { display: flex; align-items: flex-end; gap: 2px; }
.tabs > button { height: 18px; padding: 0 9px 2px; color: #b9bcc1; }
.tabs > .on { background: var(--panel); color: var(--ink); }
.ribbon-toggle { display: flex; align-items: center; height: 18px; margin: 0 0 1px 20px; }
.ribbon-toggle .min { width: 15px; height: 8px; background: #f4f4f4; }

/* ribbon */
.ribbon { display: flex; gap: 1px; margin: 0 4px 0 5px; height: 97px; background: #232a34; }
.panel { display: flex; flex-direction: column; background: var(--panel); }
.panel.last { flex: 1; }
.tools { display: flex; flex: 1; padding-top: 4px; }
.tools.pad { padding-left: 1px; padding-right: 4px; }
.foot { height: 20px; gap: 6px; padding-top: 1px; }
.big { flex-direction: column; justify-content: flex-start; width: 40px; padding-top: 3px; }
.big span { margin: 3px 0; text-align: center; line-height: 15px; }
.big.narrow { width: 38px; }
.big.text-tool { width: 50px; }
.big.dim-tool { width: 34px; }
.big.layer-tool { width: 42px; padding-top: 2px; }
.big.insert-tool { width: 42px; padding-top: 1px; }
.grid-draw { display: grid; grid-template-columns: 20px 18px; grid-template-rows: repeat(3, 24px); justify-items: center; align-items: center; }
.grid-draw.annot { grid-template-columns: 26px 12px; margin-right: 3px; }
.grid-draw.block { grid-template-columns: 22px 12px; margin-right: 3px; }
.grid-modify { display: grid; grid-template-columns: 29px 30px 28px 6px 39px; grid-template-rows: repeat(3, 24px); justify-items: center; align-items: center; }
.layers { width: 209px; padding-right: 2px; }
.layer-combo {
  display: flex; align-items: center; height: 19px; padding: 0 2px 0 1px;
  background: var(--raised); border: 1px solid #2b323d;
}
.swatch { width: 14px; height: 12px; margin: 1px 5px 0 6px; background: #fff; border: 1px solid #111; }
.layer-combo select { flex: 1; height: 16px; padding: 0; border: 0; background: none; appearance: none; }
.layer-grid { display: grid; grid-template-columns: repeat(5, 24px); grid-auto-rows: 24px; padding-top: 1px; }
.folded {
  flex-direction: column; justify-content: flex-start; width: 59px;
  margin: 1px 0 1px 1px; padding-top: 4px; background: var(--raised);
}
.folded span { margin-top: 3px; }
.folded .caret { margin-top: auto; margin-bottom: 4px; }
.big.base-tool { width: 60px; padding-top: 12px; }
.base-tool span { margin-top: 8px; }
.last .foot { display: flex; align-items: center; gap: 8px; padding-left: 5px; }
.last .foot button { gap: 6px; }

/* file tabs */
.files { display: flex; align-items: flex-end; height: 27px; padding-left: 17px; }
.file { position: relative; display: flex; align-items: center; height: 22px; }
.file > svg { position: absolute; left: 0; top: 0; }
.file > span, .file > button { position: relative; }
.first { width: 126px; padding-left: 18px; justify-content: flex-start; color: #b9bcc1; }
.current { width: 132px; padding: 1px 15px 0 15px; justify-content: space-between; z-index: 1; }
.current .x { width: 12px; height: 12px; }
.add { width: 22px; margin-left: 3px; }
.file.add > svg { top: 4px; }

/* drawing area */
.viewport {
  position: relative; flex: 1; margin: 0 3px; min-height: 480px;
  border: solid var(--panel); border-width: 6px 4px 1px 1px; border-bottom-color: #444a52;
  background: var(--canvas); overflow: hidden;
}
.gridlines { position: absolute; left: 0; top: 0; width: 100%; height: 100%; }
.minor { fill: none; stroke: #262d38; }
.major { fill: none; stroke: #33394a; }
.vp-top { position: relative; display: flex; justify-content: space-between; padding: 5px 10px 0 3px; }
.vp-ctl { display: flex; align-items: center; gap: 8px; padding-top: 2px; }
.cube {
  position: absolute; right: 16px; top: 36px; width: 126px; height: 130px;
  display: grid; grid-template-columns: 20px 1fr 20px; grid-template-rows: 24px 1fr 24px;
  place-items: center; font-size: 18px; font-weight: 300; line-height: 24px; color: #b0b1b3;
}
.cube::before {
  content: ""; position: absolute; left: 6px; top: 8px; width: 114px; height: 114px;
  border: 13px solid #454a52; border-radius: 50%;
}
.cube > * { position: relative; }
.n, .s { grid-column: 1 / 4; }
.face {
  width: 50px; height: 50px; border: 10px solid #b0b1b3; background: #a0a7ac;
  color: #3f464d; font-size: 28px; font-weight: 300; line-height: 30px;
}
.wcs {
  position: absolute; right: 55px; top: 184px; width: 48px; height: 17px; gap: 5px;
  border: 1px solid #7f818c; border-radius: 4px; background: #9496a2; color: #444853; font-size: 11px;
}
.ucs { position: absolute; left: 11px; bottom: 10px; }
.cross { position: absolute; right: 103px; bottom: 61px; }
.command {
  position: absolute; left: calc(20% - 2px); right: 20%; bottom: 1px; height: 25px;
  display: flex; align-items: center; background: #2a303b; padding-left: 4px;
}
.command > button { width: 20px; }
.command > button + button { width: 24px; margin: 0 1px 0 2px; }
.cmdbox {
  flex: 1; display: flex; align-items: center; height: 25px; padding: 0 3px 0 4px;
  border-radius: 2px; background: rgba(200, 200, 201, .95);
}
.cmdbox .caret { border-top-color: #555; }
.cmdbox button { gap: 2px; }
.cmdbox input { flex: 1; min-width: 0; margin-left: 7px; border: 0; padding: 0 0 2px; background: none; font-size: 13px; font-style: italic; color: #333; }
.cmdbox input::placeholder { color: #6a6a6a; opacity: 1; }

/* layout tabs and status bar */
.bottom { display: flex; justify-content: space-between; height: 31px; padding-left: 12px; }
.layouts { display: flex; gap: 2px; }
.lt { position: relative; width: 52px; height: 17px; color: #b0b4ba; }
.lt svg { position: absolute; left: 0; top: 0; }
.lt span { position: relative; }
.lt.on { width: 50px; color: #fff; font-weight: 600; }
.lt.add { width: 22px; }
.status {
  position: relative; display: flex; gap: 3px; height: 34px;
  margin: -2px 1px -1px 0; border: 5px solid #f00; background: var(--dark);
}
.status button { width: 22px; height: 22px; }
.status .model { width: 28px; background: var(--panel); }
.grp { display: flex; gap: 2px; height: 22px; background: var(--panel); }
.pair { display: flex; }
.status .on { background: var(--active); }
.status .dd { width: 17px; }
.status .w { width: 24px; }
.status .scale { width: 33px; gap: 3px; }
```
